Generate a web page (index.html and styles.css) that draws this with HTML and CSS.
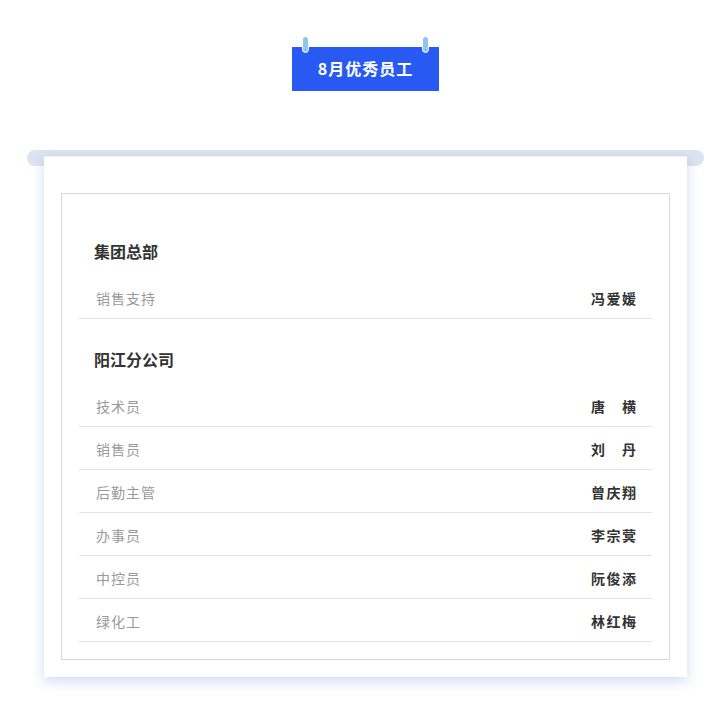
FILE: index.html
```html
<!DOCTYPE html>
<html lang="zh-CN">
<head>
    <meta charset="UTF-8">
    <meta name="viewport" content="width=device-width, initial-scale=1.0">
    <title>8月优秀员工</title>
    <link rel="stylesheet" href="styles.css">
</head>
<body>
    <div class="wrapper">
        <div class="badge">
            <span class="pin pin-left"></span>
            <span class="pin pin-right"></span>
            <h1>8月优秀员工</h1>
        </div>

        <div class="scroll">
            <div class="scroll-bar"></div>
            <div class="paper">
                <div class="list-box">
                    <div class="group">
                        <h2>集团总部</h2>
                        <div class="row">
                            <span class="role">销售支持</span>
                            <span class="name">冯爱媛</span>
                        </div>
                    </div>
                    <div class="group">
                        <h2>阳江分公司</h2>
                        <div class="row">
                            <span class="role">技术员</span>
                            <span class="name">唐横</span>
                        </div>
                        <div class="row">
                            <span class="role">销售员</span>
                            <span class="name">刘丹</span>
                        </div>
                        <div class="row">
                            <span class="role">后勤主管</span>
                            <span class="name">曾庆翔</span>
                        </div>
                        <div class="row">
                            <span class="role">办事员</span>
                            <span class="name">李宗蓂</span>
                        </div>
                        <div class="row">
                            <span class="role">中控员</span>
                            <span class="name">阮俊添</span>
                        </div>
                        <div class="row">
                            <span class="role">绿化工</span>
                            <span class="name">林红梅</span>
                        </div>
                    </div>
                </div>
            </div>
        </div>
    </div>
</body>
</html>
```

FILE: styles.css
```css
* {
    box-sizing: border-box;
    margin: 0;
    padding: 0;
}

body {
    font-family: "Noto Sans CJK SC", "Noto Sans", sans-serif;
    background-color: #ffffff;
    color: #333333;
}

.wrapper {
    width: 677px;
    margin-left: 27px;
    padding-top: 47px;
    padding-bottom: 24px;
}

.badge {
    position: relative;
    width: 147px;
    height: 44px;
    margin: 0 auto;
    padding-bottom: 3px;
    background-color: #2859f2;
    display: flex;
    justify-content: center;
    align-items: center;
}

.badge h1 {
    color: #ffffff;
    font-size: 16px;
    font-weight: bold;
    letter-spacing: 1px;
    line-height: 20px;
}

.pin {
    position: absolute;
    top: -11px;
    width: 7px;
    height: 17px;
    background-color: #8fc6ee;
    border: 1px solid #ffffff;
    border-radius: 4px;
}

.pin-left {
    left: 10px;
}

.pin-right {
    right: 10px;
}

.scroll {
    margin-top: 59px;
}

.scroll-bar {
    height: 16px;
    background-color: #dce4ef;
    border-radius: 8px;
}

.paper {
    position: relative;
    margin: -10px 17px 0;
    padding: 36px 17px 17px;
    background-color: #ffffff;
    border-top: 1px solid #fbefe0;
    box-shadow: 0 4px 12px rgba(60, 100, 230, 0.24);
}

.list-box {
    border: 1px solid #d9d9d9;
    padding: 17px 17px 17px 17px;
}

.group h2 {
    font-size: 16px;
    font-weight: bold;
    color: #333333;
    line-height: 20px;
    padding: 30px 0 0 15px;
    margin-bottom: 15px;
}

.row {
    display: flex;
    justify-content: space-between;
    align-items: center;
    height: 43px;
    padding: 12px 16px 10px 17px;
    border-bottom: 1px solid #e3e3e3;
    font-size: 14px;
    line-height: 20px;
}

.role {
    color: #999999;
    letter-spacing: 1px;
}

.name {
    display: inline-block;
    width: 45px;
    color: #333333;
    font-weight: bold;
    text-align: justify;
    text-align-last: justify;
}
```
